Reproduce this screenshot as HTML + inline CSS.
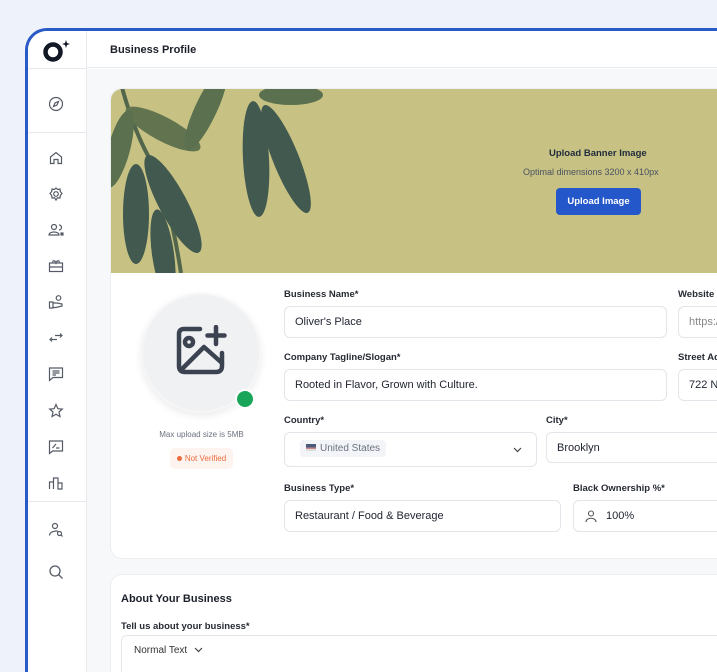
<!DOCTYPE html>
<html><head><meta charset="utf-8"><style>
*{margin:0;padding:0;box-sizing:border-box}
body{width:717px;height:672px;overflow:hidden;background:#eef2fa;font-family:"Liberation Sans",sans-serif;position:relative;color:#1b1f2a}
.frame{position:absolute;left:25px;top:28px;width:720px;height:644px;border:3px solid #2a5ac6;border-right:none;border-bottom:none;border-radius:22px 0 0 0;background:#fff;overflow:hidden}
.side{position:absolute;left:0;top:0;width:59px;height:100%;border-right:1px solid #e6e8ec;background:#fff}
.hdr{position:absolute;left:59px;top:0;right:0;height:37px;border-bottom:1px solid #e6e8ec;background:#fff}
.hdr span{position:absolute;left:23px;top:13px;font-size:11px;font-weight:bold}
.main{position:absolute;left:59px;top:38px;right:0;bottom:0;background:#f7f8fa}
.ic{position:absolute;left:19px;width:18px;height:18px}
.card{position:absolute;background:#fff;border:1px solid #eceef2;border-radius:12px;overflow:hidden}
.lbl{position:absolute;font-size:9.5px;font-weight:bold;color:#262a33}
.inp{position:absolute;height:32px;border:1px solid #e3e5ea;border-radius:6px;background:#fff;font-size:11px;color:#1f2330;padding:9px 10px;white-space:nowrap;overflow:hidden}
</style></head><body>
<div class="frame">
 <div class="side">
  <svg style="position:absolute;left:14px;top:8px" width="30" height="24" viewBox="0 0 30 24"><circle cx="11" cy="13" r="7.5" fill="none" stroke="#121826" stroke-width="4.5"/><path d="M24 1 L25 4 L28 5 L25 6 L24 9 L23 6 L20 5 L23 4Z" fill="#121826"/></svg>
  <div style="position:absolute;left:0;right:0;top:37px;border-top:1px solid #e6e8ec"></div>
  <svg class="ic" style="top:64px" viewBox="0 0 18 18" fill="none" stroke="#555b66" stroke-width="1.2"><circle cx="9" cy="9" r="6.5"/><path d="M11.5 6.5 L10 10 L6.5 11.5 L8 8Z"/></svg>
  <div style="position:absolute;left:0;right:0;top:101px;border-top:1px solid #e6e8ec"></div>
  <svg class="ic" style="top:118px" viewBox="0 0 18 18" fill="none" stroke="#555b66" stroke-width="1.2"><path d="M3.5 8 L9 3.5 L14.5 8 V14.5 H11 V10.5 H7 V14.5 H3.5Z"/></svg>
  <svg class="ic" style="top:154px" viewBox="0 0 18 18" fill="none" stroke="#555b66" stroke-width="1.2"><circle cx="9" cy="9" r="2.3"/><path d="M9 3 L10.5 4.5 L13 4 L13.3 6.5 L15 8.5 L13.3 10.5 L13 13 L10.5 12.8 L9 15 L7.5 12.8 L5 13 L4.7 10.5 L3 8.5 L4.7 6.5 L5 4 L7.5 4.5Z"/></svg>
  <svg class="ic" style="top:190px" viewBox="0 0 18 18" fill="none" stroke="#555b66" stroke-width="1.2"><circle cx="7" cy="6" r="2.5"/><path d="M2 14 C2 10 12 10 12 14Z"/><path d="M12 4 A2.5 2.5 0 0 1 12 9"/><rect x="14" y="12" width="2" height="2" fill="#555b66"/></svg>
  <svg class="ic" style="top:226px" viewBox="0 0 18 18" fill="none" stroke="#555b66" stroke-width="1.2"><rect x="2.5" y="6" width="13" height="8.5"/><path d="M2.5 10 H15.5 M6 6 C5 3 8 3 9 6 C10 3 13 3 12 6"/></svg>
  <svg class="ic" style="top:262px" viewBox="0 0 18 18" fill="none" stroke="#555b66" stroke-width="1.2"><circle cx="11.5" cy="5" r="2.3"/><path d="M2.5 9 H6 V15 H2.5Z M6 10 H10 L15 11 V13 L9 14.5 H6"/></svg>
  <svg class="ic" style="top:298px" viewBox="0 0 18 18" fill="none" stroke="#555b66" stroke-width="1.2"><path d="M3 10.5 H10 M5 8.5 L3 10.5 L5 12.5 M8 6.5 H15 M13 4.5 L15 6.5 L13 8.5"/></svg>
  <svg class="ic" style="top:334px" viewBox="0 0 18 18" fill="none" stroke="#555b66" stroke-width="1.2"><path d="M2.5 3 H15.5 V12.5 H6 L2.5 15.5Z M5.5 6 H12.5 M5.5 8 H12.5 M5.5 10 H9"/></svg>
  <svg class="ic" style="top:371px" viewBox="0 0 18 18" fill="none" stroke="#555b66" stroke-width="1.2"><path d="M9 2.5 L10.9 6.7 L15.3 7.1 L12 10 L13 14.5 L9 12.2 L5 14.5 L6 10 L2.7 7.1 L7.1 6.7Z"/></svg>
  <svg class="ic" style="top:407px" viewBox="0 0 18 18" fill="none" stroke="#555b66" stroke-width="1.2"><path d="M2.5 3 H15.5 V13 H5.5 L2.5 15.5Z M5.5 10 L9 6 M9 10 H12.5"/></svg>
  <svg class="ic" style="top:443px" viewBox="0 0 18 18" fill="none" stroke="#555b66" stroke-width="1.2"><path d="M2.5 15 V8 H6.5 V15 M6.5 15 V4 H11 V15 M11 15 V9 H15 V15 Z"/></svg>
  <div style="position:absolute;left:0;right:0;top:470px;border-top:1px solid #e6e8ec"></div>
  <svg class="ic" style="top:490px" viewBox="0 0 18 18" fill="none" stroke="#555b66" stroke-width="1.2"><circle cx="8" cy="5" r="2.5"/><path d="M2.5 14.5 C2.5 10 10 9.5 11 10.5"/><circle cx="12.5" cy="12.5" r="2"/><path d="M14 14 L15.5 15.5"/></svg>
  <svg class="ic" style="top:532px" viewBox="0 0 18 18" fill="none" stroke="#555b66" stroke-width="1.3"><circle cx="8" cy="8" r="5"/><path d="M11.7 11.7 L15.5 15.5"/></svg>
 </div>
 <div class="hdr"><span>Business Profile</span></div>
 <div class="main">
  <div class="card" style="left:23px;top:19px;width:640px;height:471px">
   <div style="position:absolute;left:0;top:0;width:100%;height:184px;background:#c7c284;overflow:hidden">
    <svg width="640" height="184" style="position:absolute;left:0;top:0">
     <path d="M10 -5 Q25 50 45 80 Q60 120 70 184" stroke="#52664c" stroke-width="4" fill="none"/>
     <g fill="#41594e">
      <ellipse cx="52" cy="40" rx="12" ry="42" transform="rotate(-62 52 40)" fill="#61744f"/>
      <ellipse cx="8" cy="60" rx="11" ry="40" transform="rotate(15 8 60)" fill="#5a704f"/>
      <ellipse cx="25" cy="125" rx="13" ry="50" transform="rotate(0 25 125)"/>
      <ellipse cx="62" cy="115" rx="14" ry="55" transform="rotate(-28 62 115)"/>
      <ellipse cx="52" cy="165" rx="11" ry="45" transform="rotate(-8 52 165)"/>
      <ellipse cx="95" cy="20" rx="11" ry="45" transform="rotate(25 95 20)" fill="#5a704f"/>
      <ellipse cx="145" cy="70" rx="13" ry="58" transform="rotate(-3 145 70)"/>
      <ellipse cx="175" cy="70" rx="13" ry="58" transform="rotate(-22 175 70)"/>
      <ellipse cx="180" cy="6" rx="32" ry="10" fill="#5a704f"/>
     </g>
    </svg>
    <div style="position:absolute;left:438px;top:59px;font-size:9.5px;font-weight:bold;color:#1f2a3a">Upload Banner Image</div>
    <div style="position:absolute;left:412px;top:78px;font-size:9px;color:#4a5160">Optimal dimensions 3200 x 410px</div>
    <div style="position:absolute;left:445px;top:99px;width:85px;height:27px;background:#2457c9;border-radius:4px;color:#fff;font-size:9.5px;font-weight:bold;text-align:center;line-height:27px">Upload Image</div>
   </div>
   <div style="position:absolute;left:30px;top:204px;width:120px;height:120px;border-radius:50%;background:#f0f1f3;border:2px solid #f6f6f7;box-shadow:0 3px 8px rgba(0,0,0,.08)"></div>
   <svg style="position:absolute;left:65px;top:236px" width="54" height="54" viewBox="0 0 54 54" fill="none" stroke="#3b4250" stroke-width="4.5" stroke-linecap="round" stroke-linejoin="round"><path d="M24 4 H8 Q3 4 3 9 V41 Q3 47 9 47 H40 Q46 47 46 41 V28"/><circle cx="13" cy="17" r="4"/><path d="M5 45 L28 22 L46 38"/><path d="M40 2 V19 M31.5 10.5 H48.5"/></svg>
   <div style="position:absolute;left:124px;top:300px;width:20px;height:20px;border-radius:50%;background:#1aa65a;border:2px solid #fff"></div>
   <div style="position:absolute;left:0;width:181px;top:341px;text-align:center;font-size:8px;color:#6b7280">Max upload size is 5MB</div>
   <div style="position:absolute;left:59px;top:359px;width:63px;height:21px;background:#fdf4ef;border-radius:5px;font-size:8px;color:#ec6b3c;line-height:21px;text-align:center"><span style="display:inline-block;width:5px;height:5px;border-radius:50%;background:#ec6b3c;vertical-align:middle;margin-right:3px"></span>Not Verified</div>
   <div class="lbl" style="left:173px;top:200px">Business Name*</div>
   <div class="inp" style="left:173px;top:217px;width:383px">Oliver's Place</div>
   <div class="lbl" style="left:567px;top:200px">Website</div>
   <div class="inp" style="left:567px;top:217px;width:80px;color:#888">https://</div>
   <div class="lbl" style="left:173px;top:263px">Company Tagline/Slogan*</div>
   <div class="inp" style="left:173px;top:280px;width:383px">Rooted in Flavor, Grown with Culture.</div>
   <div class="lbl" style="left:567px;top:263px">Street Address</div>
   <div class="inp" style="left:567px;top:280px;width:80px">722 N</div>
   <div class="lbl" style="left:173px;top:326px">Country*</div>
   <div class="inp" style="left:173px;top:343px;width:253px;height:35px;padding:7px 15px"><span style="display:inline-block;background:#f2f4f8;border-radius:4px;padding:3px 6px;color:#6b7280;font-size:10px"><span style="display:inline-block;width:10px;height:7px;background:linear-gradient(#4a5a7a 0 50%,#c88 50% 70%,#ddd 70%);margin-right:4px"></span>United States</span><svg style="position:absolute;right:14px;top:14px" width="9" height="6"><path d="M1 1 L4.5 4.5 L8 1" stroke="#444" fill="none" stroke-width="1.2"/></svg></div>
   <div class="lbl" style="left:435px;top:326px">City*</div>
   <div class="inp" style="left:435px;top:343px;width:220px;height:31px">Brooklyn</div>
   <div class="lbl" style="left:173px;top:394px">Business Type*</div>
   <div class="inp" style="left:173px;top:411px;width:277px">Restaurant / Food &amp; Beverage</div>
   <div class="lbl" style="left:462px;top:394px">Black Ownership %*</div>
   <div class="inp" style="left:462px;top:411px;width:190px;padding-left:32px">100%<svg style="position:absolute;left:10px;top:8px" width="14" height="14" viewBox="0 0 14 14" fill="none" stroke="#555" stroke-width="1.1"><circle cx="7" cy="4.5" r="2.5"/><path d="M2 13 C2 8 12 8 12 13"/></svg></div>
  </div>
  <div class="card" style="left:23px;top:505px;width:640px;height:200px">
   <div style="position:absolute;left:10px;top:18px;font-size:11px;font-weight:bold">About Your Business</div>
   <div class="lbl" style="left:10px;top:46px">Tell us about your business*</div>
   <div style="position:absolute;left:10px;top:60px;width:640px;height:100px;border:1px solid #e3e5ea;border-radius:6px">
    <div style="position:absolute;left:12px;top:9px;font-size:10px;color:#333">Normal Text <svg width="9" height="6" style="margin-left:4px"><path d="M1 1 L4.5 4.5 L8 1" stroke="#444" fill="none" stroke-width="1.2"/></svg></div>
   </div>
  </div>
 </div>
</div>
</body></html>
